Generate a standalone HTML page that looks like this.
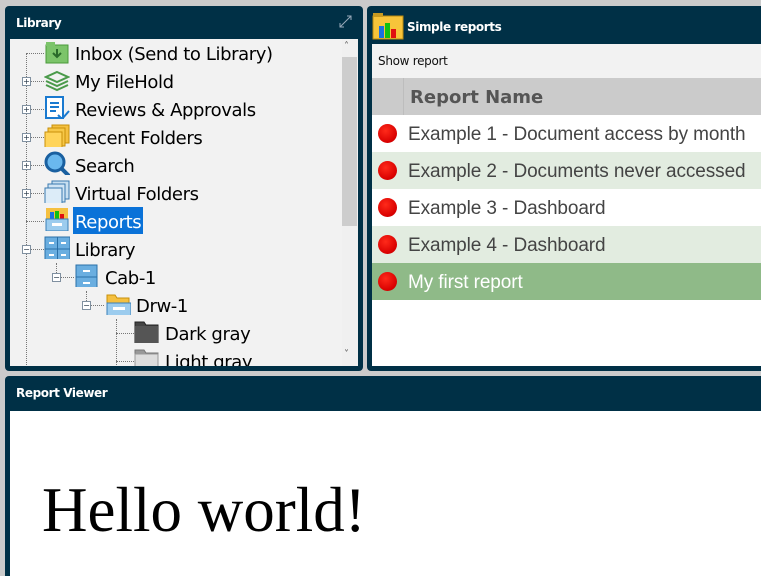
<!DOCTYPE html>
<html style="overflow:hidden;height:576px"><head><meta charset="utf-8"><style>
*{margin:0;padding:0;box-sizing:border-box}
body{width:761px;height:576px;background:#cbcbcb;position:relative;overflow:hidden;font-family:"DejaVu Sans","Liberation Sans",sans-serif}
.p{position:absolute;background:#003046;border-radius:4px}
.h{position:absolute;color:#fff;font-weight:bold;font-size:12px;font-family:"DejaVu Sans",sans-serif;letter-spacing:-0.4px}
.tree{position:absolute;left:10px;top:39px;width:348px;height:327px;background:#f2f2f2;overflow:hidden}
.row{position:absolute;height:28px;line-height:32px;font-size:18px;color:#000;white-space:nowrap;letter-spacing:-0.4px}
.ic{position:absolute;width:26px;height:24px}
.plus{position:absolute;width:9px;height:9px;border:1px solid #8090a0;background:#fff;font-size:8px;line-height:7px;text-align:center;color:#234}
.dl{position:absolute;border-top:1px dotted #777}
.dv{position:absolute;border-left:1px dotted #777}
.rp{position:absolute;left:372px;top:44px;width:389px;height:322px;background:#fff;overflow:hidden}
.r{position:absolute;left:0;width:389px;height:37px;line-height:39px;font-size:19px;letter-spacing:-0.1px;color:#444;padding-left:36px;white-space:nowrap;font-family:"Liberation Sans",sans-serif}
.dot{position:absolute;left:6px;top:9px;width:19px;height:19px;border-radius:50%;background:radial-gradient(circle at 40% 35%,#ff2a1a,#d80000 70%,#a00);}
</style></head><body>
<div class="p" style="left:5px;top:6px;width:358px;height:365px"></div>
<div class="h" style="left:16px;top:16px">Library</div>
<svg style="position:absolute;left:338px;top:14px" width="15" height="15"><path d="M2 13L13 2M9 2h4v4M2 9v4h4" stroke="#9ab" fill="none" stroke-width="1"/></svg>
<div class="tree">
 <div class="dv" style="left:16px;top:14px;height:320px"></div>
 <div class="dl" style="left:16px;top:14px;width:18px"></div>
 <div class="dl" style="left:16px;top:42px;width:18px"></div>
 <div class="dl" style="left:16px;top:70px;width:18px"></div>
 <div class="dl" style="left:16px;top:98px;width:18px"></div>
 <div class="dl" style="left:16px;top:126px;width:18px"></div>
 <div class="dl" style="left:16px;top:154px;width:18px"></div>
 <div class="dl" style="left:16px;top:182px;width:18px"></div>
 <div class="dl" style="left:16px;top:210px;width:18px"></div>
 <div class="dv" style="left:46px;top:224px;height:14px"></div>
 <div class="dl" style="left:46px;top:238px;width:18px"></div>
 <div class="dv" style="left:76px;top:252px;height:14px"></div>
 <div class="dl" style="left:76px;top:266px;width:18px"></div>
 <div class="dv" style="left:106px;top:280px;height:60px"></div>
 <div class="dl" style="left:106px;top:294px;width:18px"></div>
 <div class="dl" style="left:106px;top:322px;width:18px"></div>
 <div class="plus" style="left:12px;top:38px">+</div>
 <div class="plus" style="left:12px;top:66px">+</div>
 <div class="plus" style="left:12px;top:94px">+</div>
 <div class="plus" style="left:12px;top:122px">+</div>
 <div class="plus" style="left:12px;top:150px">+</div>
 <div class="plus" style="left:12px;top:206px">−</div>
 <div class="plus" style="left:42px;top:234px">−</div>
 <div class="plus" style="left:72px;top:262px">−</div>
 <svg class="ic" style="left:34px;top:2px"><rect x="2" y="4" width="22" height="18" fill="#7cc46a" stroke="#4a9a3a"/><rect x="2" y="1" width="9" height="4" fill="#7cc46a"/><path d="M13 8v8M9 12l4 4 4-4" stroke="#2a6a2a" stroke-width="2" fill="none"/></svg>
 <svg class="ic" style="left:34px;top:30px"><path d="M13 3l11 5-11 5L2 8z M2 12l11 5 11-5 M2 16l11 5 11-5" stroke="#4a9a4a" stroke-width="2" fill="none"/></svg>
 <svg class="ic" style="left:34px;top:56px" height="28"><rect x="2" y="2" width="17" height="21" fill="#fff" stroke="#1a7ad0" stroke-width="2"/><path d="M6 8h9M6 12h9M6 16h6M14 20l4 4 7-8" stroke="#1a7ad0" stroke-width="2" fill="none"/></svg>
 <svg class="ic" style="left:34px;top:84px" height="28"><rect x="8" y="2" width="17" height="18" fill="#f5c040" stroke="#c8900a"/><rect x="4" y="5" width="17" height="18" fill="#f7c848" stroke="#c8900a"/><rect x="1" y="9" width="17" height="17" fill="#ffd45a" stroke="#c8900a"/></svg>
 <svg class="ic" style="left:34px;top:112px" height="28"><circle cx="11" cy="11" r="9" fill="#6ab8ee" stroke="#1a60a0" stroke-width="3"/><path d="M17 17l8 8" stroke="#1a60a0" stroke-width="4"/></svg>
 <svg class="ic" style="left:34px;top:140px" height="28"><rect x="8" y="2" width="17" height="18" fill="#c8dff0" stroke="#3a7ab0"/><rect x="4" y="5" width="17" height="18" fill="#d0e4f4" stroke="#3a7ab0"/><rect x="1" y="9" width="17" height="17" fill="#dcecf8" stroke="#3a7ab0"/></svg>
 <svg class="ic" style="left:34px;top:168px" height="28"><rect x="2" y="1" width="22" height="14" fill="#f5c040"/><rect x="6" y="5" width="4" height="7" fill="#1a70e0"/><rect x="11" y="4" width="4" height="8" fill="#10c010"/><rect x="16" y="7" width="4" height="5" fill="#e01010"/><rect x="2" y="12" width="22" height="12" fill="#9cccee" stroke="#3a80b8"/><rect x="8" y="16" width="10" height="3" fill="#fff"/></svg>
 <svg class="ic" style="left:34px;top:196px" height="28"><rect x="1" y="2" width="25" height="24" fill="#6aaee0" stroke="#2a70a8"/><path d="M13.5 2v24M1 14h25" stroke="#2a70a8"/><path d="M5 8h5M17 8h5M5 20h5M17 20h5" stroke="#fff" stroke-width="2"/></svg>
 <svg class="ic" style="left:65px;top:224px" height="28"><rect x="1" y="2" width="21" height="24" fill="#6aaee0" stroke="#2a70a8"/><path d="M1 14h21" stroke="#2a70a8"/><path d="M8 8h7M8 20h7" stroke="#fff" stroke-width="2"/></svg>
 <svg class="ic" style="left:95px;top:252px" height="28"><path d="M2 4h8l2 3h12v10H2z" fill="#f5c040" stroke="#c8900a"/><rect x="2" y="12" width="24" height="13" fill="#9cccee" stroke="#3a80b8"/><rect x="8" y="16" width="12" height="3" fill="#fff"/></svg>
 <svg class="ic" style="left:124px;top:280px" height="28"><path d="M1 3h9l2 3h12v18H1z" fill="#444" stroke="#222"/><rect x="1" y="7" width="23" height="17" fill="#555"/></svg>
 <svg class="ic" style="left:124px;top:308px" height="28"><path d="M1 3h9l2 3h12v18H1z" fill="#999" stroke="#777"/><rect x="1" y="7" width="23" height="17" fill="#ddd" stroke="#999"/></svg>
 <div class="row" style="left:65px;top:0">Inbox (Send to Library)</div>
 <div class="row" style="left:65px;top:28px">My FileHold</div>
 <div class="row" style="left:65px;top:56px">Reviews &amp; Approvals</div>
 <div class="row" style="left:65px;top:84px">Recent Folders</div>
 <div class="row" style="left:65px;top:112px">Search</div>
 <div class="row" style="left:65px;top:140px">Virtual Folders</div>
 <div class="row" style="left:63px;top:168px;background:#0a72d8;color:#fff;height:27px;padding:0 2px">Reports</div>
 <div class="row" style="left:65px;top:196px">Library</div>
 <div class="row" style="left:95px;top:224px">Cab-1</div>
 <div class="row" style="left:126px;top:252px">Drw-1</div>
 <div class="row" style="left:155px;top:280px">Dark gray</div>
 <div class="row" style="left:155px;top:308px">Light gray</div>
 <div style="position:absolute;left:332px;top:0;width:16px;height:327px;background:#f0f0f0"></div>
 <div style="position:absolute;left:332px;top:18px;width:15px;height:169px;background:#cdcdcd"></div>
 <div style="position:absolute;left:334px;top:2px;font-size:10px;color:#555">˄</div>
 <div style="position:absolute;left:334px;top:310px;font-size:10px;color:#555">˅</div>
</div>

<div class="p" style="left:367px;top:6px;width:400px;height:365px"></div>
<svg style="position:absolute;left:372px;top:12px" width="32" height="28"><rect x="1" y="4" width="30" height="23" fill="#f7c43a" stroke="#b88a10"/><rect x="1" y="1" width="10" height="4" fill="#c89a20"/><rect x="7" y="14" width="5" height="12" fill="#1a70e0"/><rect x="13" y="11" width="5" height="15" fill="#10c010"/><rect x="19" y="17" width="5" height="9" fill="#e01010"/></svg>
<div class="h" style="left:407px;top:20px">Simple reports</div>
<div class="rp">
 <div style="position:absolute;left:0;top:0;width:389px;height:34px;background:#f2f2f2;font-size:12px;line-height:34px;padding-left:6px;color:#111;letter-spacing:-0.3px">Show report</div>
 <div style="position:absolute;left:0;top:34px;width:389px;height:37px;background:#cbcbcb"></div>
 <div style="position:absolute;left:31px;top:34px;width:1px;height:37px;background:#bdbdbd"></div>
 <div style="position:absolute;left:38px;top:34px;line-height:39px;font-size:18px;font-weight:bold;color:#555">Report Name</div>
 <div class="r" style="top:71px;background:#fff"><div class="dot"></div>Example 1 - Document access by month</div>
 <div class="r" style="top:108px;background:#e2ece0"><div class="dot"></div>Example 2 - Documents never accessed</div>
 <div class="r" style="top:145px;background:#fff"><div class="dot"></div>Example 3 - Dashboard</div>
 <div class="r" style="top:182px;background:#e2ece0"><div class="dot"></div>Example 4 - Dashboard</div>
 <div class="r" style="top:219px;background:#8fba88;color:#fff"><div class="dot"></div>My first report</div>
</div>

<div class="p" style="left:5px;top:376px;width:760px;height:200px;border-radius:4px 4px 0 0"></div>
<div class="h" style="left:16px;top:386px">Report Viewer</div>
<div style="position:absolute;left:10px;top:411px;width:751px;height:165px;background:#fff"></div>
<div style="position:absolute;left:42px;top:470px;font-family:'Liberation Serif',serif;font-size:63px;line-height:80px;color:#000">Hello world!</div>
</body></html>
